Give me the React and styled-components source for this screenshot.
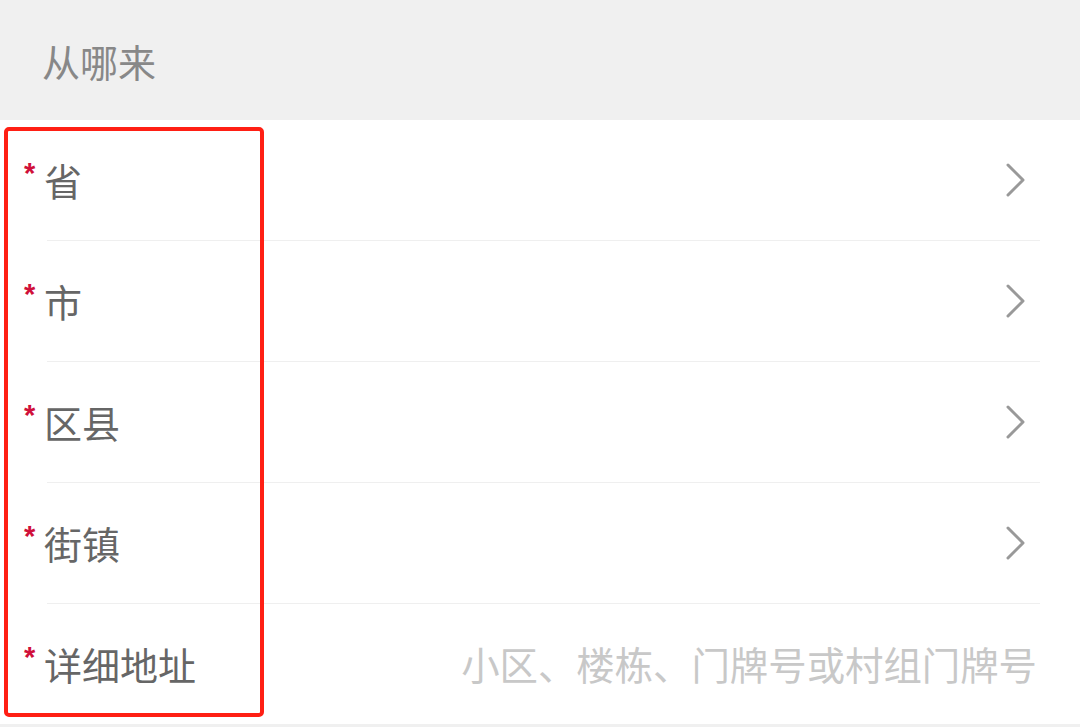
import React from "react";
import styled, { createGlobalStyle } from "styled-components";

const Global = createGlobalStyle`
  html, body {
    margin: 0;
    padding: 0;
    background: #f0f0f0;
    font-family: "Noto Sans CJK SC", "Noto Sans", sans-serif;
  }
`;

const Page = styled.div`
  position: relative;
  width: 1080px;
  height: 727px;
  overflow: hidden;
  background: #f0f0f0;
`;

const SectionTitle = styled.div`
  height: 120px;
  display: flex;
  align-items: center;
  padding-left: 42px;
  font-size: 38px;
  color: #888;
`;

const List = styled.div`
  background: #fff;
`;

const Row = styled.div`
  height: 120px;
  display: flex;
  align-items: center;
  padding: 0 40px 0 24px;
  position: relative;
  border-bottom: ${(p) => (p.last ? "none" : "1px solid transparent")};

  &::after {
    content: "";
    display: ${(p) => (p.last ? "none" : "block")};
    position: absolute;
    left: 47px;
    right: 40px;
    bottom: -1px;
    height: 1px;
    background: #efefef;
  }
`;

const Star = styled.span`
  color: #d0103a;
  font-family: "Liberation Sans", Arial, sans-serif;
  font-weight: bold;
  font-size: 29px;
  align-self: flex-start;
  margin-top: 39px;
  width: 21px;
  line-height: 1;
`;

const Label = styled.span`
  font-size: 38px;
  color: #666;
  flex: 1;
  margin-top: -2px;
  margin-left: -1px;
`;

const Placeholder = styled.span`
  font-size: 38.4px;
  color: #c8c8c8;
  margin-right: 3px;
  margin-top: -2px;
`;

const Chevron = styled.svg`
  width: 24px;
  height: 36px;
  margin-right: 12px;
`;

const Highlight = styled.div`
  position: absolute;
  left: 4px;
  top: 127px;
  width: 252px;
  height: 582px;
  border: 4px solid #ff1f14;
  border-radius: 5px;
  pointer-events: none;
`;

const rows = ["省", "市", "区县", "街镇"];

export default function App() {
  return (
    <Page>
      <Global />
      <SectionTitle>从哪来</SectionTitle>
      <List>
        {rows.map((r) => (
          <Row key={r}>
            <Star>*</Star>
            <Label>{r}</Label>
            <Chevron viewBox="0 0 24 36">
              <path
                d="M4 3 L19 18 L4 33"
                fill="none"
                stroke="#999"
                strokeWidth="3"
                strokeLinecap="round"
                strokeLinejoin="round"
              />
            </Chevron>
          </Row>
        ))}
        <Row last>
          <Star>*</Star>
          <Label>详细地址</Label>
          <Placeholder>小区、楼栋、门牌号或村组门牌号</Placeholder>
        </Row>
      </List>
      <Highlight />
    </Page>
  );
}
